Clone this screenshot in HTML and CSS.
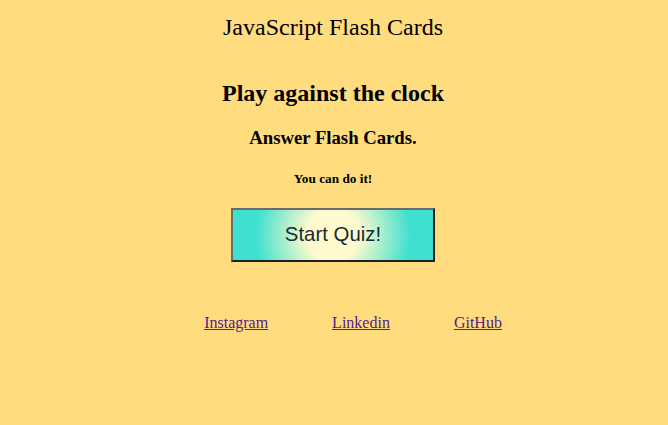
FILE: index.html
```html
<!DOCTYPE html>
<html lang="en">
<head>
<meta charset="utf-8">
<title>JavaScript Flash Cards</title>
<link rel="stylesheet" href="styles.css">
</head>
<body>
<header class="site-header">
  <div class="site-title">JavaScript Flash Cards</div>
</header>
<main class="intro">
  <h2 class="intro-heading">Play against the clock</h2>
  <h3 class="intro-sub">Answer Flash Cards.</h3>
  <h5 class="intro-note">You can do it!</h5>
  <div class="start-wrap">
    <button class="start-btn" type="button">Start Quiz!</button>
  </div>
</main>
<footer class="site-footer">
  <ul class="social">
    <li><a href="#instagram">Instagram</a></li>
    <li><a href="#linkedin">Linkedin</a></li>
    <li><a href="#github">GitHub</a></li>
  </ul>
</footer>
</body>
</html>
```
FILE: styles.css
```css
html, body {
  background: #ffdc7d;
}
body {
  margin: 8px 9px 8px 7px;
  font-family: "Liberation Serif", "Times New Roman", serif;
  color: #000;
  text-align: center;
}
.site-header {
  padding-top: 5px;
}
.site-title {
  font-size: 24px;
  line-height: 28px;
}
.intro-heading {
  font-size: 24px;
  line-height: 28px;
  margin: 38px 0 20px;
}
.intro-sub {
  font-size: 18.72px;
  line-height: 21.5px;
  margin: 0 0 22px;
}
.intro-note {
  font-size: 13.28px;
  line-height: 15.3px;
  margin: 0 0 22px;
}
.start-wrap {
  display: flex;
  justify-content: center;
}
.start-btn {
  width: 204px;
  height: 54px;
  font-family: "Liberation Sans", Arial, sans-serif;
  font-size: 20.4px;
  color: #1c2a36;
  background: radial-gradient(circle, #fffacd 0%, #fffacd 25%, #40e0d0 75%, #40e0d0 100%);
  border: 2px solid;
  border-color: #6b6b6b #1e1e1e #1e1e1e #6b6b6b;
  padding: 0;
}
.social {
  list-style: none;
  display: flex;
  justify-content: center;
  gap: 64px;
  margin: 52px 0 0;
  padding: 0 0 0 40px;
  font-size: 16px;
}
.social a {
  color: #551a8b;
}
```
